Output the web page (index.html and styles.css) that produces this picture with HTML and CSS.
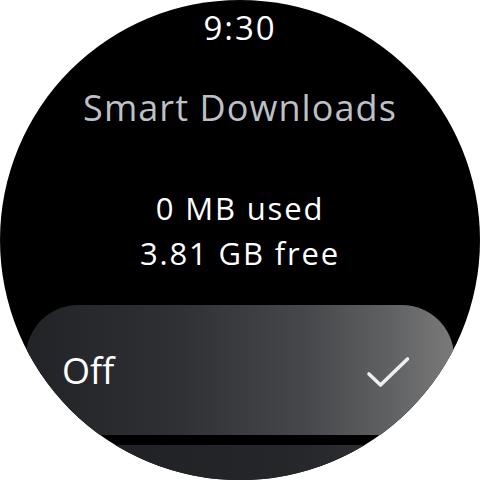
FILE: index.html
```html
<!DOCTYPE html>
<html>
<head>
<meta charset="utf-8">
<link rel="stylesheet" href="styles.css">
</head>
<body>
<div class="watch">
  <div class="time">9:30</div>
  <div class="title">Smart Downloads</div>
  <div class="usage">
    <div>0 MB used</div>
    <div>3.81 GB free</div>
  </div>
  <div class="chip">
    <span class="chip-label">Off</span>
    <svg class="check" width="48" height="40" viewBox="0 0 48 40">
      <path d="M5 23 L16.5 34 L43.5 8" fill="none" stroke="#eeeeee" stroke-width="3.6" stroke-linecap="round" stroke-linejoin="round"/>
    </svg>
  </div>
  <div class="chip2"></div>
</div>
</body>
</html>
```
FILE: styles.css
```css
html, body {
  margin: 0;
  padding: 0;
  background: #ffffff;
}
.watch {
  width: 480px;
  height: 480px;
  border-radius: 50%;
  background: #000000;
  overflow: hidden;
  display: flex;
  flex-direction: column;
  align-items: center;
  font-family: "Open Sans", Roboto, sans-serif;
  color: #ffffff;
}
.time {
  margin-top: 8px;
  font-size: 33px;
  line-height: 40px;
  height: 40px;
  letter-spacing: 0.06em;
  flex: none;
}
.title {
  margin-top: 38px;
  font-size: 36px;
  line-height: 44px;
  color: #bdc1c6;
  letter-spacing: 0.03em;
  flex: none;
}
.usage {
  margin-top: 56px;
  font-size: 31px;
  line-height: 45px;
  text-align: center;
  letter-spacing: 0.06em;
  flex: none;
}
.chip {
  margin-top: 29px;
  align-self: flex-start;
  margin-left: 26px;
  width: 428px;
  height: 130px;
  flex: none;
  border-radius: 52px;
  background: linear-gradient(90deg, #222327 0%, #2f3034 35%, #46474a 65%, #606163 85%, #7a7a7a 100%);
  display: flex;
  align-items: center;
  justify-content: space-between;
  padding: 0 42px 0 36px;
  box-sizing: border-box;
}
.chip-label {
  font-size: 36px;
  color: #ffffff;
}
.check {
  display: block;
  margin-top: 2px;
}
.chip2 {
  margin-top: 10px;
  align-self: flex-start;
  margin-left: 26px;
  width: 428px;
  height: 130px;
  flex: none;
  border-radius: 52px 52px 0 0;
  background: linear-gradient(90deg, #1e1f22 0%, #25262a 60%, #333437 100%);
}
```
